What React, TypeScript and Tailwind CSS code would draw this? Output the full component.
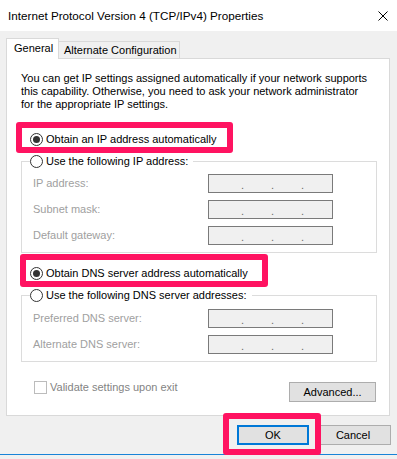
import React from 'react'

const Radio = ({ checked }: { checked?: boolean }) => (
  <span className="w-[13px] h-[13px] rounded-full border border-[#333333] bg-white flex items-center justify-center shrink-0">
    {checked && <span className="w-[7px] h-[7px] rounded-full bg-[#333333]" />}
  </span>
)

const IpBox = () => (
  <div className="w-[125px] h-[19px] border border-[#7a7a7a] bg-[#f0f0f0] flex items-end pl-[32px] pb-[1px] text-[#6d6d6d] leading-[12px]">
    <span className="w-[30px]">.</span>
    <span className="w-[30px]">.</span>
    <span className="w-[30px]">.</span>
  </div>
)

const FieldRow = ({ label }: { label: string }) => (
  <div className="flex items-center h-[19px]">
    <span className="w-[175px] text-[#a0a0a0]">{label}</span>
    <IpBox />
  </div>
)

const App = () => {
  return (
    <div className="relative w-[397px] h-[459px] bg-[#f0f0f0] overflow-hidden flex flex-col text-[11px] leading-[13px] text-black whitespace-nowrap font-['Liberation_Sans',Arial,sans-serif]">
      {/* title bar */}
      <div className="h-[31px] bg-white flex items-center pl-[8px] shrink-0">
        <span className="flex-1 text-[11.7px]">Internet Protocol Version 4 (TCP/IPv4) Properties</span>
        <svg width="10" height="10" viewBox="0 0 10 10" className="mr-[9px]">
          <path d="M0.5 0.5 L9.5 9.5 M9.5 0.5 L0.5 9.5" stroke="#000" strokeWidth="1" fill="none" />
        </svg>
      </div>

      {/* tabs */}
      <div className="mt-[7px] h-[20px] flex items-end pl-[6px] shrink-0">
        <div className="relative z-10 h-[21px] -mb-[1px] w-[53px] bg-white border border-b-0 border-[#d9d9d9] flex items-center pl-[7px] pb-[1px]">
          General
        </div>
        <div className="h-[17px] w-[121px] bg-[#f0f0f0] border border-l-0 border-b-0 border-[#d9d9d9] flex items-center pl-[5px] pt-[1px]">
          Alternate Configuration
        </div>
      </div>

      {/* panel */}
      <div className="ml-[6px] w-[384px] h-[358px] bg-white border border-[#d9d9d9] flex flex-col pl-[14px] pr-[12px] pt-[13px] shrink-0">
        <p className="leading-[13px]">
          You can get IP settings assigned automatically if your network supports
          <br />
          this capability. Otherwise, you need to ask your network administrator
          <br />
          for the appropriate IP settings.
        </p>

        <div className="mt-[20px] ml-[9px] h-[16px] flex items-center gap-[3px]">
          <Radio checked />
          <span>Obtain an IP address automatically</span>
        </div>

        <div className="mt-[14px] border border-[#dcdcdc] pl-[11px] pb-[7px] flex flex-col">
          <div className="-mt-[9px] -ml-[3px] h-[16px] w-fit bg-white pr-[5px] flex items-center gap-[3px]">
            <Radio />
            <span>Use the following IP address:</span>
          </div>
          <div className="mt-[5px] flex flex-col gap-[7px]">
            <FieldRow label="IP address:" />
            <FieldRow label="Subnet mask:" />
            <FieldRow label="Default gateway:" />
          </div>
        </div>

        <div className="mt-[12px] ml-[9px] h-[16px] flex items-center gap-[3px]">
          <Radio checked />
          <span>Obtain DNS server address automatically</span>
        </div>

        <div className="mt-[14px] border border-[#dcdcdc] pl-[11px] pb-[7px] flex flex-col">
          <div className="-mt-[9px] -ml-[3px] h-[16px] w-fit bg-white pr-[5px] flex items-center gap-[3px]">
            <Radio />
            <span>Use the following DNS server addresses:</span>
          </div>
          <div className="mt-[6px] flex flex-col gap-[7px]">
            <FieldRow label="Preferred DNS server:" />
            <FieldRow label="Alternate DNS server:" />
          </div>
        </div>

        <div className="mt-[18px] flex items-start">
          <div className="ml-[13px] flex items-center gap-[3px] h-[14px]">
            <span className="w-[13px] h-[13px] border border-[#bcbcbc] bg-white" />
            <span className="text-[#838383]">Validate settings upon exit</span>
          </div>
          <button className="ml-auto mr-[1px] mt-[2px] w-[87px] h-[20px] bg-[#e1e1e1] border border-[#adadad] flex items-center justify-center">
            Advanced...
          </button>
        </div>
      </div>

      {/* dialog buttons */}
      <div className="mt-[9px] flex pl-[237px] gap-[6px] shrink-0">
        <button className="w-[72px] h-[20px] bg-[#e1e1e1] border-2 border-[#0078d7] flex items-center justify-center">
          OK
        </button>
        <button className="w-[76px] h-[20px] bg-[#e1e1e1] border border-[#adadad] flex items-center justify-center">
          Cancel
        </button>
      </div>

      <div className="mt-[9px] h-[1px] bg-[#1883d7] shrink-0" />

      {/* annotation frames */}
      <div className="absolute left-[16px] top-[122px] w-[217px] h-[31px] border-[6px] border-[#ff1361] rounded-[3px]" />
      <div className="absolute left-[20px] top-[254px] w-[248px] h-[33px] border-[6px] border-[#ff1361] rounded-[3px]" />
      <div className="absolute left-[223px] top-[413px] w-[98px] h-[42px] border-[6px] border-[#ff1361] rounded-[3px]" />
    </div>
  )
}

export default App
